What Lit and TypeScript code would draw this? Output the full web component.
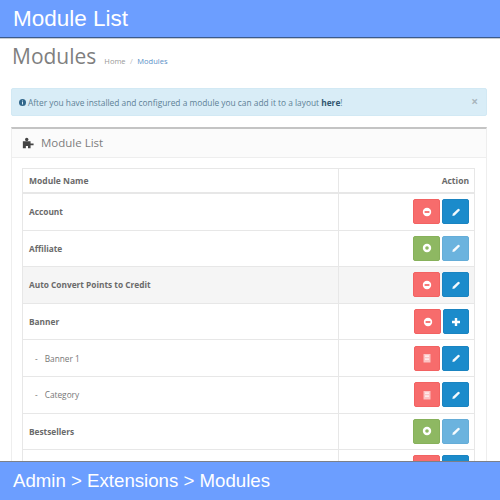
import { LitElement, html, css, svg } from "lit";
import { customElement } from "lit/decorators.js";

const minus = svg`<circle cx="7" cy="7" r="4.2" fill="#fff"/><rect x="4.6" y="6.1" width="4.8" height="1.8" fill="currentColor"/>`;
const plusC = svg`<circle cx="7" cy="7" r="4.2" fill="#fff"/><circle cx="7" cy="7" r="1.8" fill="currentColor"/>`;
const pencil = svg`<path d="M3.4 11 L3.8 8.8 L8.9 3.9 a.8.8 0 0 1 1.1 0 L10.6 4.5 a.8.8 0 0 1 0 1.1 L5.6 10.6 Z" fill="#fff" opacity=".95"/>`;
const plus = svg`<path d="M5.8 3h2.4v2.8H11v2.4H8.2V11H5.8V8.2H3V5.800h2.800z" fill="#fff"/>`;
const trash = svg`<path d="M3.500 3h7v8.500h-7z" fill="#fff" opacity=".6"/><rect x="5" y="4.500" width="4" height="1.200" fill="#fff" opacity=".9"/><rect x="5" y="7.500" width="4" height="1.200" fill="#fff" opacity=".9"/>`;

type Btn = [string, unknown];
interface Row { name: string; sub?: boolean; hl?: boolean; wide?: boolean; a: Btn; b: Btn; }
const rows: Row[] = [
  { name: "Account", a: ["red", minus], b: ["blue", pencil] },
  { name: "Affiliate", a: ["green", plusC], b: ["pale", pencil] },
  { name: "Auto Convert Points to Credit", hl: true, a: ["red", minus], b: ["blue", pencil] },
  { name: "Banner", wide: true, a: ["red", minus], b: ["blue", plus] },
  { name: "Banner 1", sub: true, a: ["red", trash], b: ["blue", pencil] },
  { name: "Category", sub: true, a: ["red", trash], b: ["blue", pencil] },
  { name: "Bestsellers", a: ["green", plusC], b: ["pale", pencil] },
  { name: "", a: ["red", minus], b: ["blue", pencil] },
];

@customElement("app-root")
export class AppRoot extends LitElement {
  static styles = css`
    :host { display: block; width: 500px; height: 500px; overflow: hidden; background: #fff;
      font-family: "Open Sans", "Noto Sans", sans-serif; }
    .frame { display: flex; flex-direction: column; height: 500px; }
    .bar { flex: none; background: #6c9eff; color: #fff; font-family: "Liberation Sans", Arial, sans-serif; display: flex; align-items: center; padding: 0 13px; }
    .top { height: 37px; font-size: 22.500px; border-bottom: 1px solid #3b5a8c; box-shadow: 0 1px 0 #c8ccd2; position: relative; z-index: 1; }
    .bottom { height: 38px; font-size: 18.650px; border-top: 1px solid #7c8088; }
    main { flex: 1; min-height: 0; overflow: hidden; padding: 0 13px 0 11px; }
    .title { display: flex; align-items: baseline; height: 50px; padding: 2px 0 0 1px; box-sizing: border-box; }
    h1 { margin: 0; font-size: 21px; font-weight: 400; color: #7f7f7f; line-height: 33px; }
    .crumb { margin-left: 8px; font-size: 7.500px; color: #999; }
    .crumb span { margin: 0 4.500px; color: #bbb; }
    .crumb b { font-weight: 400; color: #5b8fc7; }
    .alert { height: 28px; box-sizing: border-box; background: #d9edf7; border: 1px solid #d2e9f4; border-radius: 2px;
      display: flex; align-items: center; padding: 0 8px 0 7px; font-size: 8.350px; color: #5d8196; gap: 2px; }
    .alert svg { width: 7px; height: 7px; flex: none; }
    .alert b { color: #31566f; font-weight: 700; }
    .alert .msg { flex: 1; }
    .alert .x { color: #aab6bd; font-size: 12px; font-weight: 700; line-height: 1; }
    .panel { margin-top: 11px; border: 1px solid #eeeeee; border-top: 2px solid #c4c4c4; }
    .head { height: 28px; background: #fbfbfb; border-bottom: 1px solid #eeeeee; display: flex; align-items: center; padding: 0 10px; gap: 7px; font-size: 11.500px; color: #7d7d7d; }
    .head span { position: relative; top: -1px; }
    .head svg { width: 12px; height: 12px; flex: none; }
    .body { padding: 10px 10px 0; }
    table { width: 453px; border-collapse: collapse; table-layout: fixed; font-size: 8.300px; color: #6a6a6a; }
    td, th { border: 1px solid #e7e7e7; padding: 0 5px 0 6px; text-align: left; }
    th { height: 23px; border-bottom-width: 2px; font-weight: 700; color: #6a6a6a; font-size: 8.500px; }
    td { height: 35.600px; }
    td:first-child, th:first-child { width: 304px; }
    td.name { font-weight: 700; color: #6a6a6a; }
    td.sub { font-weight: 400; color: #777; padding-left: 12px; }
    td.sub i { font-style: normal; margin-right: 7px; }
    tr.hl td { background: #f5f5f5; }
    th.act { text-align: right; }
    .btns { display: flex; justify-content: flex-end; gap: 2px; }
    .btn { width: 27px; height: 25px; box-sizing: border-box; border-radius: 2px; border: 1px solid; display: flex; align-items: center; justify-content: center; }
    .btn svg { width: 14px; height: 14px; display: block; }
    .btn.red { background: #f76c6c; border-color: #f26262; color: #f76c6c; }
    .btn.blue { background: #1b8bcb; border-color: #1a84c1; color: #1b8bcb; }
    .btn.green { background: #8eb862; border-color: #87b15b; color: #8eb862; }
    .btn.pale { background: #6bb3de; border-color: #65add8; color: #6bb3de; }
    .btn.nar { width: 26px; }
  `;

  private btn(b: Btn, nar = false) {
    return html`<div class="btn ${b[0]} ${nar ? "nar" : ""}"><svg viewBox="0 0 14 14">${b[1]}</svg></div>`;
  }

  render() {
    return html`<div class="frame">
      <header class="bar top">Module List</header>
      <main>
        <div class="title"><h1>Modules</h1><div class="crumb">Home<span>/</span><b>Modules</b></div></div>
        <div class="alert">
          <svg viewBox="0 0 14 14"><circle cx="7" cy="7" r="7" fill="#31668a"/><rect x="6" y="6" width="2" height="5" fill="#d9edf7"/><rect x="6" y="3" width="2" height="2" fill="#d9edf7"/></svg>
          <div class="msg">After you have installed and configured a module you can add it to a layout <b>here</b>!</div>
          <div class="x">×</div>
        </div>
        <section class="panel">
          <div class="head">
            <svg viewBox="0 0 14 14"><circle cx="5.500" cy="3" r="2" fill="#444"/><path d="M1 5h9v2.500h3.500v2H10V13H7v-2.500H4.500V13H1z" fill="#444"/></svg>
            <span>Module List</span>
          </div>
          <div class="body">
            <table>
              <tr><th>Module Name</th><th class="act">Action</th></tr>
              ${rows.map(r => html`<tr class=${r.hl ? "hl" : ""}>
                <td class="name ${r.sub ? "sub" : ""}">${r.sub ? html`<i>-</i>` : ""}${r.name}</td>
                <td><div class="btns">${this.btn(r.a, r.sub)}${this.btn(r.b, r.wide)}</div></td>
              </tr>`)}
            </table>
          </div>
        </section>
      </main>
      <footer class="bar bottom">Admin &gt; Extensions &gt; Modules</footer>
    </div>`;
  }
}
